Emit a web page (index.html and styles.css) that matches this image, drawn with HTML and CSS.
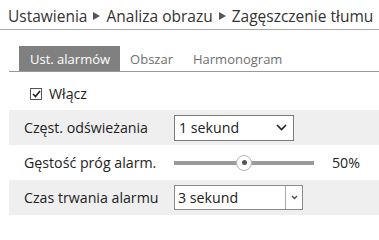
FILE: index.html
```html
<!DOCTYPE html>
<html lang="pl">
<head>
<meta charset="utf-8">
<link rel="stylesheet" href="styles.css">
</head>
<body>
<div class="crumbs">
  <span>Ustawienia</span>
  <svg class="arr" width="7" height="8" viewBox="0 0 7 8"><polygon points="0,0 7,4 0,8" fill="#555"/></svg>
  <span>Analiza obrazu</span>
  <svg class="arr" width="7" height="8" viewBox="0 0 7 8"><polygon points="0,0 7,4 0,8" fill="#555"/></svg>
  <span>Zagęszczenie tłumu</span>
</div>
<div class="page">
  <div class="tabs">
    <div class="tab active">Ust. alarmów</div>
    <div class="tab">Obszar</div>
    <div class="tab">Harmonogram</div>
  </div>
  <div class="enable">
    <span class="cb"><svg width="9" height="8" viewBox="0 0 9 8"><polyline points="1,4 3.5,6.5 8,1" fill="none" stroke="#222" stroke-width="1.6"/></svg></span>
    <span>Włącz</span>
  </div>
  <div class="row gray">
    <div class="label">Częst. odświeżania</div>
    <div class="sel sel1"><span>1 sekund</span><svg width="11" height="7" viewBox="0 0 11 7"><polyline points="1,1 5.5,5.5 10,1" fill="none" stroke="#222" stroke-width="1.6"/></svg></div>
  </div>
  <div class="row">
    <div class="label">Gęstość próg alarm.</div>
    <div class="slider"><div class="track"></div><div class="knob"><div class="dot"></div></div></div>
    <div class="pct">50%</div>
  </div>
  <div class="row gray">
    <div class="label">Czas trwania alarmu</div>
    <div class="sel sel2"><span class="val">3 sekund</span><span class="btn"><svg width="7" height="5" viewBox="0 0 7 5"><polyline points="1,1 3.5,3.5 6,1" fill="none" stroke="#444" stroke-width="1.3"/></svg></span></div>
  </div>
</div>
</body>
</html>
```
FILE: styles.css
```css
* { box-sizing: border-box; }
html, body { margin: 0; padding: 0; background: #fff; }
body {
  font-family: "Open Sans", "Noto Sans", "Liberation Sans", sans-serif;
  color: #222;
  width: 379px;
  overflow: hidden;
}
.crumbs {
  height: 30px;
  padding: 2px 0 0 8px;
  display: flex;
  align-items: center;
  gap: 6px;
  font-size: 15.5px;
  color: #333;
  border-bottom: 1px solid #a8a8a8;
  white-space: nowrap;
}
.arr { flex: none; }
.page { padding: 16px 0 0 9px; }
.tabs {
  display: flex;
  height: 26px;
  padding-left: 10px;
  border-bottom: 1px solid #999;
  font-size: 13px;
}
.tab {
  padding: 0 10px;
  display: flex;
  align-items: center;
  color: #707070;
}
.tab.active { background: #808080; color: #fff; padding: 0 10px 0 11px; }
.enable {
  height: 38px;
  display: flex;
  align-items: center;
  padding: 5px 0 0 21px;
  gap: 7px;
  font-size: 14.2px;
  color: #222;
}
.cb {
  width: 12px;
  height: 12px;
  border: 1px solid #555;
  display: flex;
  align-items: center;
  justify-content: center;
  background: #fff;
}
.row {
  height: 35px;
  display: flex;
  align-items: center;
  padding-left: 15px;
  font-size: 14.2px;
}
.row.gray { background: #efefef; }
.label { width: 150px; flex: none; color: #222; }
.sel {
  background: #fff;
  border: 1px solid #7a7a7a;
  display: flex;
  align-items: center;
  font-size: 14.2px;
}
.sel1 {
  width: 120px;
  height: 26px;
  padding: 0 6px 0 4px;
  justify-content: space-between;
}
.sel2 {
  width: 129px;
  height: 25px;
  border-color: #8a8a8a;
}
.sel2 .val { flex: 1; padding-left: 3px; }
.sel2 .btn {
  width: 17px;
  height: 100%;
  border-left: 1px solid #aaa;
  display: flex;
  align-items: center;
  justify-content: center;
}
.slider {
  position: relative;
  width: 140px;
  height: 16px;
  display: flex;
  align-items: center;
}
.track { width: 100%; height: 4px; background: #9a9a9a; }
.knob {
  position: absolute;
  left: 62px;
  top: 0;
  width: 16px;
  height: 16px;
  border-radius: 50%;
  background: #fff;
  border: 1px solid #b5b5b5;
  display: flex;
  align-items: center;
  justify-content: center;
}
.dot { width: 5px; height: 5px; border-radius: 50%; background: #555; }
.pct { margin-left: 18px; color: #222; }
```
